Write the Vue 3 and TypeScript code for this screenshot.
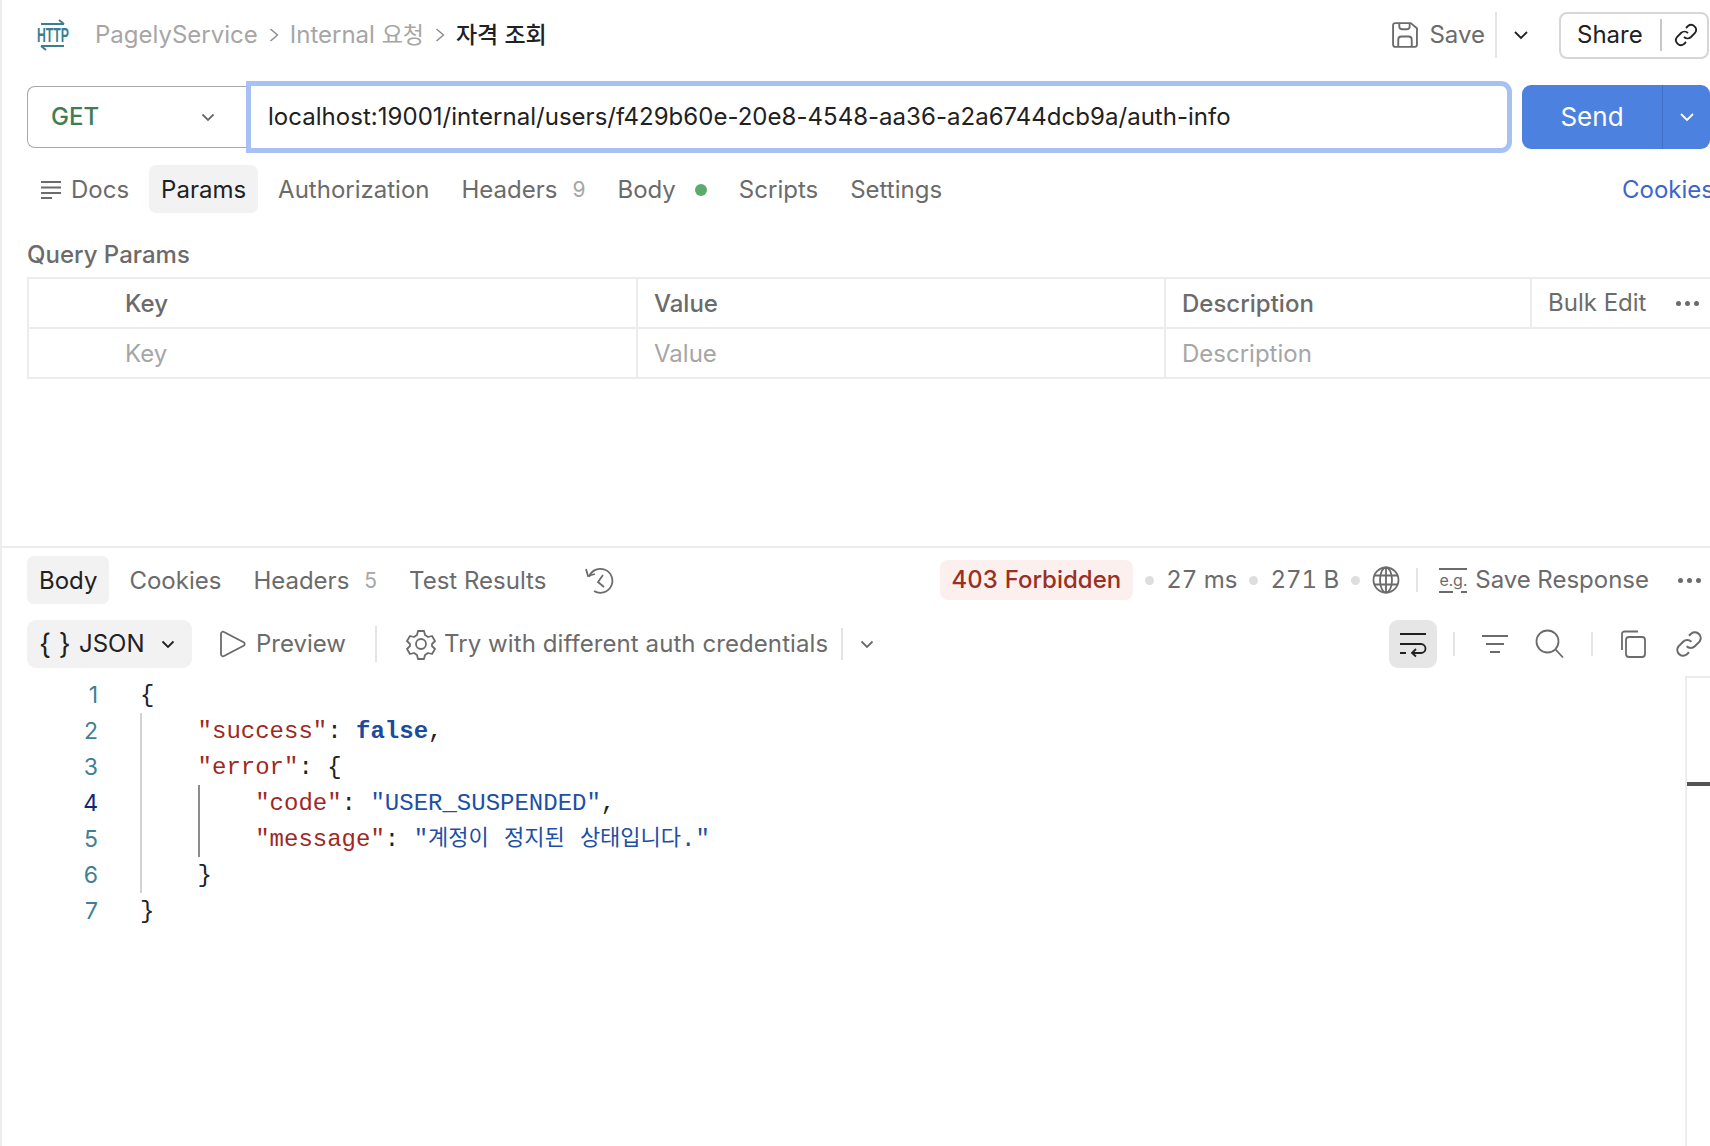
<script setup lang="ts">
interface Token {
  t: string
  c?: string
}

const requestTabs = [
  { label: 'Params', active: true },
  { label: 'Authorization' },
  { label: 'Headers', count: '9' },
  { label: 'Body', dot: true },
  { label: 'Scripts' },
  { label: 'Settings' }
]

const responseTabs = [
  { label: 'Body', active: true },
  { label: 'Cookies' },
  { label: 'Headers', count: '5' },
  { label: 'Test Results' }
]

const codeLines: { indent: number; tokens: Token[]; current?: boolean }[] = [
  { indent: 0, tokens: [{ t: '{' }] },
  { indent: 1, tokens: [{ t: '"success"', c: 'k' }, { t: ': ' }, { t: 'false', c: 'bool' }, { t: ',' }] },
  { indent: 1, tokens: [{ t: '"error"', c: 'k' }, { t: ': {' }] },
  { indent: 2, current: true, tokens: [{ t: '"code"', c: 'k' }, { t: ': ' }, { t: '"USER_SUSPENDED"', c: 'str' }, { t: ',' }] },
  { indent: 2, tokens: [{ t: '"message"', c: 'k' }, { t: ': ' }, { t: '"', c: 'str' }, { t: '계정이 정지된 상태입니다', c: 'str ko' }, { t: '."', c: 'str' }] },
  { indent: 1, tokens: [{ t: '}' }] },
  { indent: 0, tokens: [{ t: '}' }] }
]
</script>

<template>
  <div class="app">
    <section class="request">
      <header class="topbar">
        <svg class="logo" width="34" height="32" viewBox="0 0 34 32">
          <path d="M5 5h23M23 1l5 4M5 27h23M5 27l5 4" fill="none" stroke="#3b7f8f" stroke-width="2" />
          <text x="1" y="23" class="logo-text" textLength="32" lengthAdjust="spacingAndGlyphs">HTTP</text>
        </svg>
        <nav class="crumbs">
          <span>PagelyService</span>
          <svg class="crumb-sep" width="10" height="16" viewBox="0 0 10 16"><path d="M1.500 2l7 6-7 6" /></svg>
          <span>Internal <span class="ko-ui">요청</span></span>
          <svg class="crumb-sep" width="10" height="16" viewBox="0 0 10 16"><path d="M1.500 2l7 6-7 6" /></svg>
          <strong class="ko-ui">자격 조회</strong>
        </nav>
        <div class="actions">
          <svg class="ico" width="28" height="28" viewBox="0 0 27 27">
            <path d="M4 2h15l6 5v16a2 2 0 0 1-2 2H4a2 2 0 0 1-2-2V4a2 2 0 0 1 2-2z" />
            <path d="M8 2v3a3 3 0 0 0 3 3h4a3 3 0 0 0 3-3V2M7 25v-7a3 3 0 0 1 3-3h7a3 3 0 0 1 3 3v7" />
          </svg>
          <span class="save">Save</span>
          <i class="vsep save-sep" />
          <svg class="ico dark chev-save" width="16" height="10" viewBox="0 0 16 10"><path d="M2 2l6 6 6-6" /></svg>
          <div class="share">
            <span>Share</span>
            <i class="vsep" />
            <svg class="ico dark" width="24" height="24" viewBox="0 0 24 24">
              <path d="M10 14a5 5 0 0 0 7 0l4-4a5 5 0 0 0-7-7l-2 2M14 10a5 5 0 0 0-7 0l-4 4a5 5 0 0 0 7 7l2-2" />
            </svg>
          </div>
        </div>
      </header>

      <div class="urlrow">
        <div class="method">
          <span>GET</span>
          <svg class="ico" width="14" height="9" viewBox="0 0 14 9"><path d="M1.500 1.500L7 7l5.500-5.500" /></svg>
        </div>
        <div class="url">localhost:19001/internal/users/f429b60e-20e8-4548-aa36-a2a6744dcb9a/auth-info</div>
        <div class="send">
          <span class="send-label">Send</span>
          <span class="send-more">
            <svg width="16" height="10" viewBox="0 0 16 10"><path d="M2 2l6 6 6-6" /></svg>
          </span>
        </div>
      </div>

      <div class="tabs">
        <div class="tab docs">
          <svg class="ico" width="20" height="20" viewBox="0 0 20 20"><path d="M0 2h20M0 7.500h20M0 13h20M0 18h11" /></svg>
          <span>Docs</span>
        </div>
        <div v-for="tab in requestTabs" :key="tab.label" class="tab" :class="{ active: tab.active }">
          <span>{{ tab.label }}</span>
          <span v-if="tab.count" class="count">{{ tab.count }}</span>
          <i v-if="tab.dot" class="green" />
        </div>
        <span class="cookies">Cookies</span>
      </div>

      <div class="qp-title">Query Params</div>
      <div class="table">
        <div class="cell head key">Key</div>
        <div class="cell head">Value</div>
        <div class="cell head">Description</div>
        <div class="cell bulk">
          <span>Bulk Edit</span>
          <span class="dots"><b /><b /><b /></span>
        </div>
        <div class="cell ph key">Key</div>
        <div class="cell ph">Value</div>
        <div class="cell ph wide">Description</div>
      </div>
    </section>

    <section class="response">
      <div class="res-head">
        <div class="tabs res-tabs">
          <div v-for="tab in responseTabs" :key="tab.label" class="tab" :class="{ active: tab.active }">
            <span>{{ tab.label }}</span>
            <span v-if="tab.count" class="count">{{ tab.count }}</span>
          </div>
          <svg class="ico history" width="32" height="32" viewBox="0 0 32 32">
            <path d="M8 25a12 12 0 1 0-5-14" />
            <path d="M0 3l2 7 7-2M17 9l-5 7 6 5" />
          </svg>
        </div>
        <div class="stats">
          <span class="badge">403 Forbidden</span>
          <i class="gdot" />
          <span>27 ms</span>
          <i class="gdot" />
          <span>271 B</span>
          <i class="gdot" />
          <svg class="ico globe" width="28" height="28" viewBox="0 0 28 28">
            <circle cx="14" cy="14" r="12.500" />
            <ellipse cx="14" cy="14" rx="6" ry="12.500" />
            <path d="M14 1.500v25M2.500 9.500h23M2.500 18.500h23" />
          </svg>
          <i class="vsep stat-sep" />
          <span class="eg">
            <i class="eg-top" />
            <span class="eg-text">e.g.</span>
            <i class="eg-bottom" />
          </span>
          <span class="save-res">Save Response</span>
          <span class="dots res-dots"><b /><b /><b /></span>
        </div>
      </div>

      <div class="toolbar">
        <div class="json">
          <span class="braces">{ }</span>
          <span>JSON</span>
          <svg class="ico dark" width="14" height="9" viewBox="0 0 14 9"><path d="M1.500 1.500L7 7l5.500-5.500" /></svg>
        </div>
        <div class="preview">
          <svg class="ico" width="26" height="28" viewBox="0 0 26 28"><path d="M1 3.500a2 2 0 0 1 3-1.500l20 10.500a2 2 0 0 1 0 3L4 26a2 2 0 0 1-3-1.500z" /></svg>
          <span>Preview</span>
        </div>
        <i class="vsep tall" />
        <div class="try">
          <svg class="ico" width="32" height="32" viewBox="0 0 32 32">
            <path d="M13 3h6l1 4 3 2 4-1 3 5-3 3v2l3 3-3 5-4-1-3 2-1 4h-6l-1-4-3-2-4 1-3-5 3-3v-2l-3-3 3-5 4 1 3-2z" stroke-linejoin="round" />
            <circle cx="16" cy="16" r="5" />
          </svg>
          <span>Try with different auth credentials</span>
        </div>
        <i class="vsep try-sep" />
        <svg class="ico try-chev" width="14" height="9" viewBox="0 0 14 9"><path d="M1.500 1.500L7 7l5.500-5.500" /></svg>

        <div class="tools">
          <span class="wrap-btn">
            <svg class="ico dark" width="28" height="26" viewBox="0 0 28 26">
              <path d="M1 3h26M1 13h21a4 4 0 0 1 0 9h-9M17 18l-4 4 4 3.500M1 22h6" />
            </svg>
          </span>
          <i class="vsep thin" />
          <svg class="ico filter" width="26" height="20" viewBox="0 0 26 20"><path d="M0 2h26M4 10h18M8 18h10" /></svg>
          <svg class="ico search" width="30" height="30" viewBox="0 0 30 30">
            <circle cx="12.500" cy="12.500" r="11" />
            <path d="M20.500 20.500L28 28.500" />
          </svg>
          <i class="vsep thin search-sep" />
          <svg class="ico copy" width="28" height="28" viewBox="0 0 28 28">
            <rect x="7" y="7" width="19" height="20" rx="3" />
            <path d="M3 20V4a2.500 2.500 0 0 1 2.500-2.500H19" />
          </svg>
          <svg class="ico link" width="28" height="28" viewBox="0 0 24 24">
            <path d="M10 14a5 5 0 0 0 7 0l4-4a5 5 0 0 0-7-7l-2 2M14 10a5 5 0 0 0-7 0l-4 4a5 5 0 0 0 7 7l2-2" />
          </svg>
        </div>
      </div>

      <div class="editor">
        <div class="code">
          <div v-for="(line, i) in codeLines" :key="i" class="line">
            <span class="num" :class="{ current: line.current }">{{ i + 1 }}</span>
            <span class="src">
              <i v-for="n in line.indent" :key="n" class="guide" :class="{ strong: n === 2 }" />
              <span v-for="(token, j) in line.tokens" :key="j" :class="token.c">{{ token.t }}</span>
            </span>
          </div>
        </div>
        <aside class="minimap"><i /></aside>
      </div>
    </section>
  </div>
</template>

<style scoped>
.app {
  box-sizing: border-box;
  width: 1710px;
  height: 1146px;
  overflow: hidden;
  border-left: 2px solid #ececec;
  background: #fff;
  color: #6b6b6b;
  font-family: Inter, "Noto Sans CJK KR", sans-serif;
  font-size: 24px;
  line-height: 30px;
}

i {
  display: block;
}

svg {
  display: block;
  flex: none;
  overflow: visible;
}

.ico {
  fill: none;
  stroke: #6b6b6b;
  stroke-width: 1.8;
}

.ico.dark {
  stroke: #212121;
}

.vsep {
  width: 2px;
  background: #e4e4e4;
}

.request {
  box-sizing: border-box;
  height: 548px;
  padding-left: 25px;
  border-bottom: 2px solid #ececec;
}

.topbar {
  display: flex;
  align-items: center;
  height: 70px;
}

.logo {
  margin-left: 9px;
}

.logo-text {
  fill: #3b7f8f;
  stroke: none;
  font-family: "Liberation Sans", sans-serif;
  font-size: 20px;
  font-weight: 700;
}

.crumbs {
  display: flex;
  align-items: center;
  gap: 11px;
  margin-left: 25px;
  color: #a6a6a6;
}

.crumb-sep {
  fill: none;
  stroke: #8a8a8a;
  stroke-width: 1.4;
}

.ko-ui {
  font-size: 23px;
}

.crumbs strong {
  color: #212121;
  font-weight: 500;
}

.actions {
  display: flex;
  align-items: center;
  margin-left: auto;
  padding-right: 1px;
}

.save {
  margin-left: 10px;
}

.save-sep {
  height: 46px;
  margin-left: 10px;
}

.chev-save {
  margin: 0 30px 0 16px;
}

.share {
  box-sizing: border-box;
  display: flex;
  align-items: center;
  width: 150px;
  height: 47px;
  padding-left: 16px;
  border: 2px solid #d6d6d6;
  border-radius: 8px;
  color: #212121;
}

.share .vsep {
  height: 32px;
  margin: 0 12px 0 17px;
  background: #c8c8c8;
}

.urlrow {
  display: flex;
  height: 64px;
  margin-top: 15px;
}

.method {
  box-sizing: border-box;
  display: flex;
  align-items: center;
  justify-content: space-between;
  width: 224px;
  height: 62px;
  margin-top: 1px;
  padding: 0 36px 0 23px;
  border: 1.5px solid #a8a8a8;
  border-right: 0;
  border-radius: 8px 0 0 8px;
  color: #3f7d54;
  font-weight: 500;
}

.url {
  box-sizing: border-box;
  width: 1256px;
  height: 62px;
  margin-top: 1px;
  padding-left: 17px;
  border-radius: 0 6px 6px 0;
  box-shadow: 0 0 0 5px #a8c1f5;
  color: #212121;
  letter-spacing: 0.03px;
  line-height: 62px;
}

.send {
  display: flex;
  width: 188px;
  height: 64px;
  margin-left: 15px;
  border-radius: 9px;
  background: #4d81e0;
  color: #fff;
  font-size: 26px;
  line-height: 63px;
}

.send-label {
  width: 141px;
  text-align: center;
  box-sizing: border-box;
  border-right: 1px solid #3f6fc7;
}

.send-more {
  display: flex;
  flex: 1;
  align-items: center;
  justify-content: center;
}

.send-more svg {
  fill: none;
  stroke: #fff;
  stroke-width: 1.8;
}

.tabs {
  display: flex;
  align-items: center;
  gap: 8px;
  height: 48px;
  margin-top: 16px;
}

.tab {
  box-sizing: border-box;
  display: flex;
  align-items: center;
  height: 48px;
  padding: 2px 12px 0;
  border-radius: 7px;
  white-space: nowrap;
}

.tab.active {
  background: #f2f2f2;
  color: #212121;
}

.docs {
  gap: 10px;
  padding-left: 14px;
}

.count {
  margin-left: 15px;
  color: #a6a6a6;
  font-size: 21px;
}

.green {
  width: 12px;
  height: 12px;
  margin-left: 19px;
  border-radius: 50%;
  background: #5cab6d;
}

.cookies {
  margin-left: auto;
  margin-right: -4px;
  padding-top: 2px;
  color: #3c66c9;
}

.qp-title {
  margin-top: 27px;
  font-weight: 500;
}

.table {
  display: grid;
  grid-template-columns: 609px 528px 366px 1fr;
  grid-template-rows: 50px 50px;
  margin-top: 7px;
  border-top: 2px solid #ececec;
  border-left: 2px solid #ececec;
}

.cell {
  box-sizing: border-box;
  display: flex;
  align-items: center;
  padding-top: 2px;
  padding-left: 16px;
  border-right: 2px solid #ececec;
  border-bottom: 2px solid #ececec;
}

.cell.key {
  padding-left: 96px;
}

.head {
  font-weight: 500;
}

.ph {
  color: #a6a6a6;
}

.wide {
  grid-column: span 2;
  border-right: 0;
}

.bulk {
  padding-top: 0;
  border-right: 0;
  gap: 30px;
}

.dots {
  display: flex;
  gap: 4px;
}

.dots b {
  width: 5px;
  height: 5px;
  border-radius: 50%;
  background: #6b6b6b;
}

.response {
  padding-left: 25px;
}

.res-head {
  display: flex;
  align-items: center;
  justify-content: space-between;
  height: 48px;
  margin-top: 8px;
}

.res-tabs {
  margin-top: 0;
}

.history {
  margin-top: 4px;
  margin-left: 20px;
}

.stats {
  display: flex;
  align-items: center;
  height: 40px;
  padding-right: 9px;
  font-variant-numeric: tabular-nums;
}

.badge {
  padding: 5px 12px;
  border-radius: 8px;
  background: #fcf0ee;
  color: #9a2f24;
  font-weight: 500;
}

.gdot {
  width: 9px;
  height: 9px;
  margin: 0 12px;
  border-radius: 50%;
  background: #dedede;
}

.stat-sep {
  height: 24px;
  margin: 0 20px 0 16px;
}

.eg {
  display: flex;
  flex-direction: column;
  align-items: center;
  justify-content: space-between;
  width: 30px;
  height: 25px;
}

.eg-top,
.eg-bottom {
  width: 28px;
  height: 2px;
  background: #6b6b6b;
}

.eg-bottom {
  background: linear-gradient(90deg, #6b6b6b 0 14px, transparent 14px 22px, #6b6b6b 22px);
}

.eg-text {
  font-size: 16px;
  line-height: 18px;
}

.save-res {
  margin-left: 7px;
}

.res-dots {
  margin-left: 29px;
}

.toolbar {
  display: flex;
  align-items: center;
  height: 48px;
  margin-top: 16px;
}

.json {
  display: flex;
  align-items: center;
  width: 165px;
  height: 48px;
  box-sizing: border-box;
  padding-left: 12px;
  border-radius: 9px;
  background: #f2f2f2;
  color: #212121;
}

.braces {
  width: 40px;
  font-size: 28px;
}

.json svg {
  margin-left: 16px;
}

.preview {
  display: flex;
  align-items: center;
  gap: 10px;
  margin-left: 28px;
}

.tall {
  height: 36px;
  margin-left: 29px;
}

.try {
  display: flex;
  align-items: center;
  gap: 7px;
  margin-left: 28px;
  letter-spacing: 0.08px;
}

.try-sep {
  height: 32px;
  margin-left: 13px;
}

.try-chev {
  margin-left: 17px;
}

.tools {
  display: flex;
  align-items: center;
  margin-left: auto;
  padding-right: 7px;
}

.wrap-btn {
  display: flex;
  align-items: center;
  justify-content: center;
  width: 48px;
  height: 48px;
  border-radius: 9px;
  background: #e6e6e6;
}

.thin {
  height: 24px;
}

.tools .thin {
  margin-left: 16px;
}

.filter {
  margin-left: 27px;
}

.search {
  margin-left: 27px;
}

.tools .search-sep {
  margin-left: 26px;
}

.copy {
  margin-left: 26px;
}

.link {
  margin-left: 28px;
}

.editor {
  display: flex;
  justify-content: space-between;
  margin-top: 9px;
}

.code {
  font-family: "Liberation Mono", "Noto Sans CJK KR", monospace;
  font-size: 24px;
  color: #222;
}

.line {
  display: flex;
  height: 36px;
  line-height: 36px;
}

.num {
  width: 72px;
  padding-right: 1px;
  box-sizing: border-box;
  text-align: right;
  color: #3f7f99;
  font-family: Inter, sans-serif;
  font-size: 23px;
  line-height: 36px;
}

.num.current {
  color: #0f2a75;
}

.src {
  display: flex;
  margin-left: 41px;
  white-space: pre;
  line-height: 38px;
}

.guide {
  width: 57.6px;
  height: 36px;
  box-sizing: border-box;
  border-left: 2px solid #d2d2d2;
}

.guide.strong {
  border-left-color: #8c8c8c;
}

.k {
  color: #a0281f;
}

.bool {
  color: #1c4a9c;
  font-weight: 700;
}

.str {
  color: #1c4fa5;
}

.ko {
  font-size: 22px;
  word-spacing: 2px;
}

.minimap {
  box-sizing: border-box;
  width: 25px;
  height: 470px;
  margin-top: -1px;
  border-top: 2px solid #ececec;
  border-left: 2px solid #ececec;
}

.minimap i {
  height: 4px;
  margin-top: 104px;
  background: #555;
}
</style>
